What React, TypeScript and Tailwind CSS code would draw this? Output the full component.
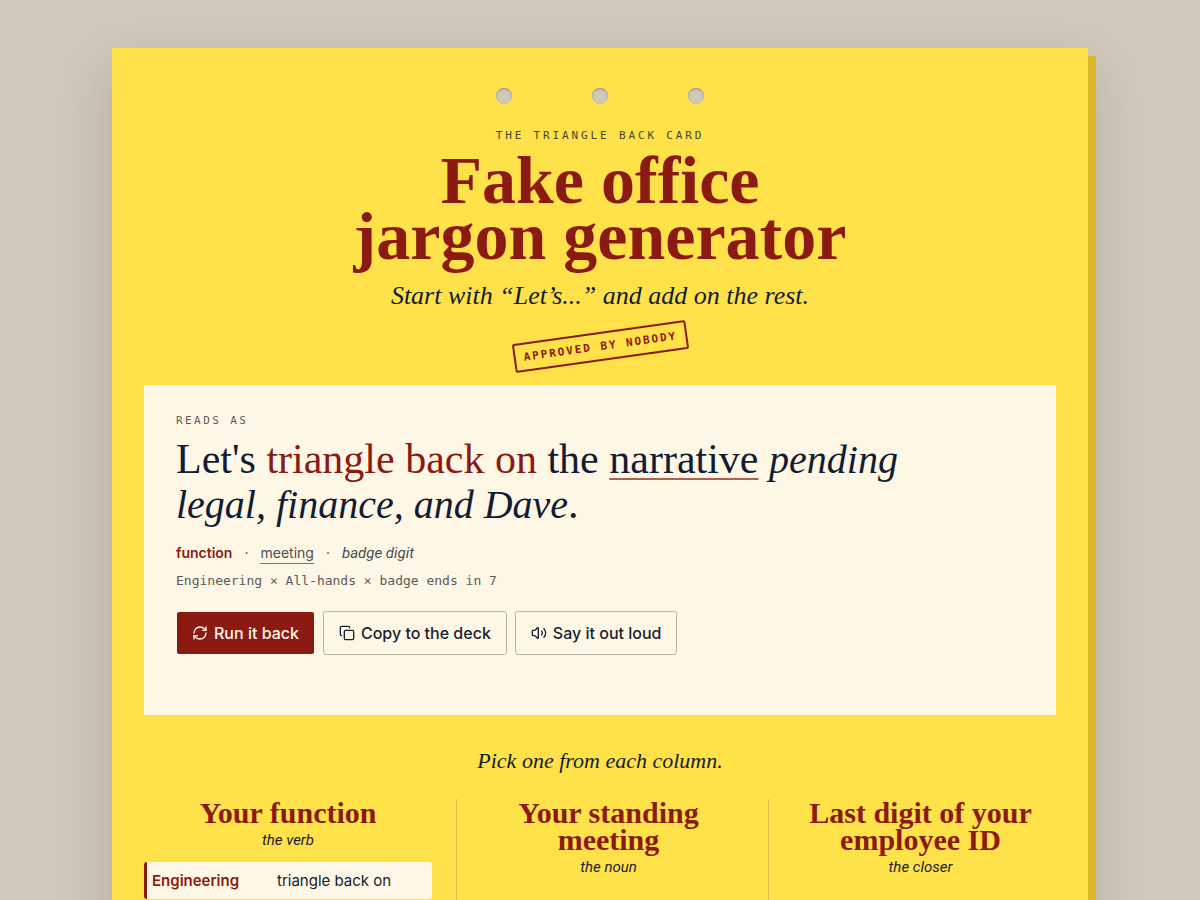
import type { ReactNode } from "react";
import { Copy, RefreshCw, Volume2 } from "lucide-react";

const serif = "font-['Liberation_Serif',serif]";
const mono = "font-['DejaVu_Sans_Mono',monospace]";
const slanted = "font-['Roboto',sans-serif] italic text-[15px]";

function ActionButton({ icon, primary, children }: { icon: ReactNode; primary?: boolean; children: ReactNode }) {
  const tone = primary ? "border-transparent bg-clip-padding bg-[#8b1a12] text-[#fff7e6]" : "border-[#bdb3a2] text-[#1a2130]";
  return (
    <button
      type="button"
      className={`flex h-11 items-center gap-1.5 rounded-[3px] border px-[15px] text-base font-medium ${tone}`}
    >
      {icon}
      {children}
    </button>
  );
}

function Column({ title, part, divided, children }: { title: string; part: string; divided?: boolean; children?: ReactNode }) {
  return (
    <section className={`pb-24 text-center ${divided ? "border-l border-[#dfc240] pl-4" : ""}`}>
      <h2 className={`${serif} text-[30px] leading-[27px] font-bold text-[#8b1a12]`}>{title}</h2>
      <p className={`${slanted} mt-1 leading-5 text-[#1a2130]`}>{part}</p>
      {children}
    </section>
  );
}

export default function App() {
  return (
    <div className="min-h-screen bg-[#d0c8bb] px-6 py-12 font-['Inter',sans-serif] text-[#141c33]">
      <main className="mx-auto max-w-[976px] bg-[#ffe14a] px-8 pt-10 shadow-[8px_8px_0_#dab828,0_24px_48px_rgba(60,50,30,0.2)]">
        <div className="flex justify-center gap-20" aria-hidden="true">
          <span className="size-4 rounded-full bg-[#d0c8bb] shadow-[inset_0_1px_2px_rgba(0,0,0,0.3)]" />
          <span className="size-4 rounded-full bg-[#d0c8bb] shadow-[inset_0_1px_2px_rgba(0,0,0,0.3)]" />
          <span className="size-4 rounded-full bg-[#d0c8bb] shadow-[inset_0_1px_2px_rgba(0,0,0,0.3)]" />
        </div>

        <header className="mt-6 flex flex-col items-center text-center">
          <p className={`${mono} text-[11px] leading-4 tracking-[0.26em] text-[#4a472f]`}>THE TRIANGLE BACK CARD</p>
          <h1 className={`${serif} mt-2 text-[68px] leading-[56px] font-bold text-[#8b1a12]`}>
            Fake office
            <br />
            jargon generator
          </h1>
          <p className={`${serif} mt-4 text-[26px] leading-8 italic`}>Start with “Let’s...” and add on the rest.</p>
          <p
            className={`${mono} mt-5 -rotate-8 rounded-[2px] border-2 border-[#8b1a12] px-2 py-1 text-[11px] leading-[17px] font-bold tracking-[0.18em] text-[#8b1a12]`}
          >
            APPROVED BY NOBODY
          </p>
        </header>

        <section className="mt-6 bg-[#fff7e6] px-8 pt-7 pb-15">
          <p className={`${mono} text-[11px] leading-4 tracking-[0.22em] text-[#5c5a58]`}>READS AS</p>
          <p className={`${serif} mt-2 max-w-3xl text-[42px] leading-[45px]`}>
            Let's <span className="text-[#8b1a12]">triangle back on</span> the{" "}
            <span className="underline decoration-[#b0604f] decoration-2 underline-offset-[5px]">narrative</span>{" "}
            <em className="text-[40px] leading-none">pending legal, finance, and Dave</em>.
          </p>
          <div className="mt-4 flex h-5 items-center gap-3 text-sm leading-5 text-[#4b4d52]">
            <span className="font-semibold text-[#8b1a12]">function</span>
            <span aria-hidden="true">·</span>
            <span className="border-b border-[#b95a50]">meeting</span>
            <span aria-hidden="true">·</span>
            <span className={slanted}>badge digit</span>
          </div>
          <p className={`${mono} mt-2 text-[13px] leading-5 text-[#5c5a58]`}>Engineering × All-hands × badge ends in 7</p>
          <div className="mt-5 flex flex-wrap gap-2">
            <ActionButton primary icon={<RefreshCw size={16} strokeWidth={2} />}>
              Run it back
            </ActionButton>
            <ActionButton icon={<Copy size={16} strokeWidth={2} />}>Copy to the deck</ActionButton>
            <ActionButton icon={<Volume2 size={16} strokeWidth={2} />}>Say it out loud</ActionButton>
          </div>
        </section>

        <p className={`${serif} mt-8 text-center text-[22px] leading-7 italic`}>Pick one from each column.</p>

        <div className="mt-6 grid grid-cols-3 gap-6">
          <Column title="Your function" part="the verb">
            <button
              type="button"
              aria-pressed="true"
              className="mt-3 grid w-full grid-cols-[117px_1fr] gap-2 rounded-[3px] border-l-3 border-[#8b1a12] bg-[#fff7e6] py-2 pr-2 pl-[5px] text-left text-[15px] leading-[21px]"
            >
              <span className="font-semibold text-[#8b1a12]">Engineering</span>
              <span>triangle back on</span>
            </button>
          </Column>
          <Column divided title="Your standing meeting" part="the noun" />
          <Column divided title="Last digit of your employee ID" part="the closer" />
        </div>
      </main>
    </div>
  );
}
